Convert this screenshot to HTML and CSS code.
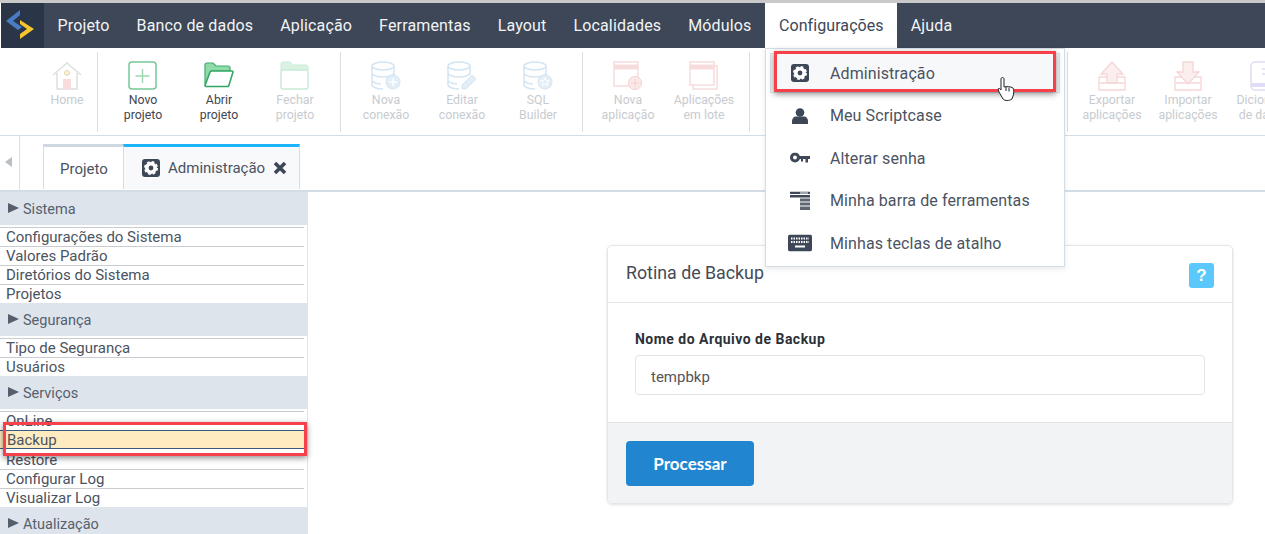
FILE: index.html
```html
<!DOCTYPE html>
<html lang="pt-BR">
<head>
<meta charset="utf-8">
<title>Scriptcase - Rotina de Backup</title>
<link rel="stylesheet" href="styles.css">
</head>
<body>
<header class="menubar">
  <div class="logo">
    <svg width="36" height="36" viewBox="0 0 36 36"><path d="M15 2 1 13l12 9 4-3-9-6 7-6z" fill="#4a7cc4"/><path d="M15 12 29 21 15 31v-5l7-5-7-5z" fill="#f8c62c"/></svg>
  </div>
  <nav class="menu">
    <span class="menu-item">Projeto</span>
    <span class="menu-item">Banco de dados</span>
    <span class="menu-item">Aplicação</span>
    <span class="menu-item">Ferramentas</span>
    <span class="menu-item">Layout</span>
    <span class="menu-item">Localidades</span>
    <span class="menu-item">Módulos</span>
    <div class="menu-item active">Configurações
      <div class="dropdown">
        <div class="drop-row hover">
          <svg class="drop-icon" width="18" height="18" viewBox="0 0 18 18"><rect width="18" height="18" rx="3" fill="#3d4757"/><circle cx="9" cy="9" r="4.200" fill="none" stroke="#fff" stroke-width="3.600"/><circle cx="9" cy="9" r="6" fill="none" stroke="#fff" stroke-width="2" stroke-dasharray="2.700 2"/></svg>
          <span>Administração</span>
        </div>
        <div class="drop-row">
          <svg class="drop-icon" width="16" height="16" viewBox="0 0 16 16"><circle cx="8" cy="4.500" r="4.300" fill="#3d4757"/><path d="M0 16v-3c0-2.500 2-4.500 4-4.500h8c2 0 4 2 4 4.500v3z" fill="#3d4757"/></svg>
          <span>Meu Scriptcase</span>
        </div>
        <div class="drop-row">
          <svg class="drop-icon" width="20" height="11" viewBox="0 0 20 11"><circle cx="5" cy="5" r="3.500" fill="none" stroke="#3d4757" stroke-width="3"/><path d="M8 3.500h12v3h-2v3.500h-2.500V6.500H13V9h-2V6.500H8z" fill="#3d4757"/></svg>
          <span>Alterar senha</span>
        </div>
        <div class="drop-row">
          <svg class="drop-icon" width="20" height="19" viewBox="0 0 20 19"><path d="M0 0h20v2.500H0zM0 3.500h20V6H0z" fill="#3d4757"/><rect x="10" y="1" width="8" height="1" fill="#fff"/><rect x="10" y="7" width="10" height="3" fill="#5d6572"/><rect x="10" y="11" width="10" height="3" fill="#5d6572"/><rect x="10" y="15" width="10" height="3.500" fill="#5d6572"/></svg>
          <span>Minha barra de ferramentas</span>
        </div>
        <div class="drop-row">
          <svg class="drop-icon" width="24" height="17" viewBox="0 0 24 17"><rect width="24" height="17" rx="2" fill="#3d4757"/><path d="M3 4h18M3 7.500h18" stroke="#fff" stroke-width="2" stroke-dasharray="1.500 1"/><path d="M7 12h10" stroke="#fff" stroke-width="2"/></svg>
          <span>Minhas teclas de atalho</span>
        </div>
        <div class="mark mark-menu"></div>
        <svg class="cursor" width="18" height="25" viewBox="0 0 18 25"><path d="M4 2c0-2 3-2 3 0v8c2-.6 7-.6 9 1 1 1 1 6 0 8l-1 3c-3 2-7 2-9 0L2 15 1 12c1-1 2-.5 3 1z" fill="#fff" stroke="#222" stroke-width="1"/><path d="M9 10v4M12 10.500v4" stroke="#222" stroke-width="1"/></svg>
      </div>
    </div>
    <span class="menu-item">Ajuda</span>
  </nav>
</header>

<section class="toolbar">
  <div class="tool first-tool">
    <svg width="30" height="30" viewBox="0 0 30 30"><path d="M1 14 15 2l14 12M5 12v16h20V12" fill="none" stroke="#dcdfe3" stroke-width="1.500"/><circle cx="15" cy="12" r="2.500" fill="#fdf3d8" stroke="#e3d6ae"/><rect x="11" y="18" width="8" height="10" fill="#fbdcdc"/></svg>
    <span class="tool-label">Home</span>
  </div>
  <i class="sep sep-first"></i>
  <div class="tool on">
    <svg width="30" height="30" viewBox="0 0 30 30"><rect x="1" y="1" width="27" height="27" rx="3" fill="#fff" stroke="#74c996" stroke-width="1.500"/><path d="M14.500 8v14M7.500 15h14" stroke="#9adab3" stroke-width="1.500"/></svg>
    <span class="tool-label">Novo<br>projeto</span>
  </div>
  <div class="tool on">
    <svg width="30" height="30" viewBox="0 0 30 30"><path d="M1 23V3.500C1 2.500 2 2 3 2h6l3 3h12c1 0 2 1 2 2v3H8L3 23z" fill="#8fdcaa" stroke="#3dae6d" stroke-width="1.200"/><path d="M8 10h20c1 0 1 1 1 1l-4 13c0 1-1 1.500-2 1.500H2c-1 0-1-1-1-1L6 11c.5-1 1-1 2-1z" fill="#fff" stroke="#32a663" stroke-width="1.600"/></svg>
    <span class="tool-label">Abrir<br>projeto</span>
  </div>
  <div class="tool">
    <svg width="30" height="30" viewBox="0 0 30 30"><path d="M1 9V3c0-1 1-2 2-2h7l3 3h13c1 0 2 1 2 2v3z" fill="#d9f2e2" stroke="#c8ecd6"/><rect x="1" y="9" width="27" height="19" rx="2" fill="#fff" stroke="#c8ecd6" stroke-width="1.500"/></svg>
    <span class="tool-label">Fechar<br>projeto</span>
  </div>
  <i class="sep"></i>
  <div class="tool">
    <svg width="30" height="30" viewBox="0 0 30 30"><g fill="none" stroke="#d3e5f3" stroke-width="1.500"><ellipse cx="12" cy="5" rx="11" ry="4"/><path d="M1 5v19c0 2 5 4 11 4M23 5v10M1 12c0 2 5 4 11 4s11-2 11-4M1 19c0 2 5 4 9 4"/></g><circle cx="22" cy="21" r="7" fill="#e3eef7" stroke="#d3e5f3"/><path d="M22 17v8M18 21h8" stroke="#fff" stroke-width="1.500"/></svg>
    <span class="tool-label">Nova<br>conexão</span>
  </div>
  <div class="tool">
    <svg width="30" height="30" viewBox="0 0 30 30"><g fill="none" stroke="#d3e5f3" stroke-width="1.500"><ellipse cx="12" cy="5" rx="11" ry="4"/><path d="M1 5v19c0 2 5 4 11 4M23 5v8M1 12c0 2 5 4 11 4s11-2 11-4M1 19c0 2 5 4 9 4"/></g><path d="M15 28v-4l10-10 4 4-10 10z" fill="#e3eef7" stroke="#d3e5f3"/></svg>
    <span class="tool-label">Editar<br>conexão</span>
  </div>
  <div class="tool">
    <svg width="30" height="30" viewBox="0 0 30 30"><g fill="none" stroke="#d3e5f3" stroke-width="1.500"><ellipse cx="12" cy="5" rx="11" ry="4"/><path d="M1 5v19c0 2 5 4 11 4M23 5v10M1 12c0 2 5 4 11 4s11-2 11-4M1 19c0 2 5 4 9 4"/></g><circle cx="22" cy="21" r="7" fill="#e3eef7" stroke="#d3e5f3"/><path d="m22 16.500 1.300 3h3l-2.500 2 1 3.200-2.800-1.900-2.800 1.900 1-3.200-2.500-2h3z" fill="none" stroke="#fff"/></svg>
    <span class="tool-label">SQL<br>Builder</span>
  </div>
  <i class="sep sep-tight"></i>
  <div class="tool">
    <svg width="30" height="30" viewBox="0 0 30 30"><rect x="1" y="1" width="24" height="24" fill="#fff" stroke="#f6dcdc" stroke-width="1.500"/><path d="M1 6h24" stroke="#f6dcdc" stroke-width="5"/><circle cx="22" cy="22" r="6.500" fill="#fbe9e9" stroke="#f3d0d0"/><path d="M22 18v8M18 22h8" stroke="#f3d0d0"/></svg>
    <span class="tool-label">Nova<br>aplicação</span>
  </div>
  <div class="tool">
    <svg width="30" height="30" viewBox="0 0 30 30"><rect x="4" y="5" width="24" height="23" fill="#fff" stroke="#f6dcdc" stroke-width="1.500"/><rect x="1" y="1" width="24" height="23" fill="#fff" stroke="#f6dcdc" stroke-width="1.500"/><path d="M1 6h24" stroke="#f6dcdc" stroke-width="5"/></svg>
    <span class="tool-label">Aplicações<br>em lote</span>
  </div>
  <i class="sep"></i>
  <div class="tool-hidden"></div>
  <i class="sep sep-last"></i>
  <div class="tool">
    <svg width="30" height="30" viewBox="0 0 30 30"><path d="M15 1 26 13h-6v9H10v-9H4z" fill="#fbeeee" stroke="#f6d6d6" stroke-width="1.300"/><path d="M10 16H2v6h26v-6h-8M2 22v7h26v-7" fill="none" stroke="#f6d6d6" stroke-width="1.300"/></svg>
    <span class="tool-label">Exportar<br>aplicações</span>
  </div>
  <div class="tool">
    <svg width="30" height="30" viewBox="0 0 30 30"><path d="M10 1h10v10h6L15 23 4 11h6z" fill="#fbeeee" stroke="#f6d6d6" stroke-width="1.300"/><path d="M8 16H2v6h26v-6h-6M2 22v7h26v-7" fill="none" stroke="#f6d6d6" stroke-width="1.300"/></svg>
    <span class="tool-label">Importar<br>aplicações</span>
  </div>
  <div class="tool">
    <svg width="30" height="30" viewBox="0 0 30 30"><rect x="2" y="1" width="25" height="28" rx="4" fill="#fff" stroke="#e0dcf5" stroke-width="1.500"/><path d="M2 24h25" stroke="#e0dcf5" stroke-width="4"/><path d="M13 8h10M13 13h10" stroke="#e0dcf5" stroke-width="1.500"/></svg>
    <span class="tool-label">Dicionário<br>de dados</span>
  </div>
</section>

<section class="tabs">
  <div class="tab-scroll"><i class="tab-arrow"></i></div>
  <div class="tab">Projeto</div>
  <div class="tab tab-active">
    <svg width="18" height="18" viewBox="0 0 18 18"><rect width="18" height="18" rx="3" fill="#3d4757"/><circle cx="9" cy="9" r="4.200" fill="none" stroke="#fff" stroke-width="3.600"/><circle cx="9" cy="9" r="6" fill="none" stroke="#fff" stroke-width="2" stroke-dasharray="2.700 2"/></svg>
    <span>Administração</span>
    <svg class="tab-close" width="14" height="14" viewBox="0 0 14 14"><path d="m2 2 10 10M12 2 2 12" stroke="#3d4757" stroke-width="3.600"/></svg>
  </div>
</section>

<main class="main">
  <aside class="sidebar">
    <div class="side-head">Sistema</div>
    <ul class="side-list">
      <li>Configurações do Sistema</li>
      <li>Valores Padrão</li>
      <li>Diretórios do Sistema</li>
      <li>Projetos</li>
    </ul>
    <div class="side-head">Segurança</div>
    <ul class="side-list">
      <li>Tipo de Segurança</li>
      <li>Usuários</li>
    </ul>
    <div class="side-head">Serviços</div>
    <ul class="side-list">
      <li>OnLine</li>
      <li class="selected">Backup<div class="mark mark-side"></div></li>
      <li>Restore</li>
      <li>Configurar Log</li>
      <li>Visualizar Log</li>
    </ul>
    <div class="side-head">Atualização</div>
  </aside>
  <div class="content">
    <section class="panel">
      <div class="panel-head">
        <h2>Rotina de Backup</h2>
        <span class="help">?</span>
      </div>
      <div class="panel-body">
        <label class="field-label" for="backup-name">Nome do Arquivo de Backup</label>
        <input class="field" id="backup-name" type="text" value="tempbkp">
      </div>
      <div class="panel-foot">
        <button class="primary" type="button">Processar</button>
      </div>
    </section>
  </div>
</main>
</body>
</html>
```
FILE: styles.css
```css
* { box-sizing: border-box; }
html, body { margin: 0; height: 534px; overflow: hidden; background: #fff; }
body { font-family: Roboto, "Liberation Sans", sans-serif; color: #3d4757; position: relative; }

.menubar { display: flex; height: 48px; border-top: 3px solid #c9c9c9; background: #3d4757; padding-left: 1px; box-shadow: inset 1px 0 0 #fff; }
.logo { width: 43px; height: 45px; background: #2a3648; padding: 5px 0 0 4px; }
.logo svg { display: block; }
.menu { display: flex; }
.menu-item { position: relative; padding: 0 13.5px; line-height: 45px; font-size: 16px; letter-spacing: .15px; color: #f2f4f6; white-space: nowrap; }
.menu-item.active { background: #fff; color: #3d4757; padding: 0 13.5px 0 14px; letter-spacing: .08px; }

.dropdown { position: absolute; top: 45px; left: 0; width: 300px; height: 219px; padding: 4px; background: #fff; border: 1px solid #d3dde5; box-shadow: 0 2px 5px rgba(60,70,90,.12); z-index: 5; line-height: normal; font-size: 16px; letter-spacing: .1px; color: #4b5361; }
.drop-row { display: flex; align-items: center; height: 42.5px; position: relative; padding-left: 60px; }
.drop-row.hover { height: 40px; margin-bottom: 1.6px; background: #f7f8fa; border: 1px solid #dfe5ea; padding-left: 59px; }
.drop-icon { position: absolute; left: 30px; top: 50%; transform: translate(-50%, -50%); }
.hover .drop-icon { left: 29px; }
.mark { position: absolute; border: 3px solid #f6404a; box-shadow: 0 2px 6px rgba(0,0,0,.45); pointer-events: none; z-index: 6; }
.mark-menu { left: 8px; top: 2px; width: 282px; height: 41px; }
.cursor { position: absolute; left: 231px; top: 28px; z-index: 7; }

.toolbar { display: flex; height: 88px; padding: 4px 0 0 37px; border-bottom: 1px solid #d3dde5; overflow: hidden; }
.sep { flex: none; width: 1px; height: 80px; margin: 0 7px; background: #d8e0e6; }
.sep-first { margin-left: 0; }
.sep-tight { margin-left: 6px; }
.sep-last { margin-left: 6px; margin-right: 6px; }
.tool { flex: none; width: 76px; display: flex; flex-direction: column; align-items: center; padding-top: 9px; }
.first-tool { width: 60px; }
.tool svg { display: block; height: 30px; flex: none; }
.tool-label { margin-top: 2px; font-size: 12.3px; line-height: 15px; text-align: center; color: #c7cbd0; white-space: nowrap; }
.on .tool-label { color: #3f4650; }
.tool-hidden { flex: none; width: 304px; }

.tabs { display: flex; height: 56px; border-bottom: 2px solid #d3dde5; }
.tab-scroll { width: 20px; border-right: 1px solid #d8e0e6; margin-right: 23px; display: flex; align-items: center; padding: 0 0 3px 5px; }
.tab-arrow { display: block; border: 5.500px solid transparent; border-right: 7px solid #b9bec4; border-left: 0; }
.tab { margin-top: 8px; height: 45px; width: 80px; border-top: 3px solid #cfd8e0; border-left: 1px solid #d3dde5; font-size: 15px; line-height: 44px; padding-left: 16px; background: #fff; color: #4b5361; }
.tab-active { width: 177px; display: flex; align-items: center; gap: 8px; border-top-color: #1eb4fb; background: #f7f9fb; border-right: 1px solid #d3dde5; padding-left: 18px; }
.tab-close { margin-left: 0; }

.main { display: flex; height: 342px; }
.sidebar { flex: none; width: 308px; font-size: 15px; color: #4b5361; }
.side-head { height: 33px; line-height: 35px; font-size: 14.5px; padding-left: 23px; background: #dee4ec; position: relative; color: #55606c; overflow: hidden; }
.side-head::before { content: ""; position: absolute; left: 8px; top: 11px; border: 5.500px solid transparent; border-left: 11px solid #55606c; border-right: 0; }
.side-list { list-style: none; margin: 0; padding: 2px 3px 0 0; border-right: 1px solid #dee4ec; }
.side-list li { height: 19px; line-height: 18px; padding-left: 6px; border-top: 1px solid #c9cdd1; position: relative; color: #4b5361; }
.side-list li.selected { background: #feecc0; border-top: 1px solid #3b5a80; border-bottom: 1px solid #3b5a80; height: 19px; margin-bottom: 1px; padding-left: 7px; margin-right: -1px; line-height: 18px; z-index: 2; }
.mark-side { left: 3px; top: -9px; width: 304px; height: 34px; }
.side-list li.selected + li { border-top: 0; padding-top: 1px; }

.content { flex: 1; padding: 53px 32px 0 299px; }
.panel { border: 1px solid #e3e6ea; border-radius: 5px; box-shadow: 0 1px 3px rgba(0,0,0,.12); height: 259px; display: flex; flex-direction: column; overflow: hidden; font-family: Lato, "Liberation Sans", sans-serif; }
.panel-head { flex: none; height: 57px; border-bottom: 1px solid #e3e6ea; display: flex; align-items: center; justify-content: space-between; padding: 0 18px; }
.panel-head h2 { margin: 0 0 3px; font: 400 17.8px Roboto, sans-serif; color: #444b55; }
.help { width: 25px; height: 25px; margin-top: 3px; border-radius: 3px; background: #5ac8fa; color: #fff; font: 700 17px/25px "Liberation Sans", sans-serif; text-align: center; }
.panel-body { flex: none; height: 119px; padding: 28px 27px 0; }
.field-label { display: block; font: 700 14px/16px Roboto, sans-serif; letter-spacing: .48px; color: #2c3138; margin-bottom: 8px; }
.field { display: block; width: 100%; height: 40px; padding: 3px 15px 0; border: 1px solid #e1e3e6; border-radius: 4px; font: 400 15px Roboto, sans-serif; color: #555; background: #fff; }
.panel-foot { flex: 1; background: #f2f3f5; border-top: 1px solid #e0e2e5; padding: 18px; }
.primary { display: block; width: 128px; height: 45px; border: 0; border-radius: 4px; background: #2185d0; color: #fff; font: 700 17px Lato, sans-serif; }
```
